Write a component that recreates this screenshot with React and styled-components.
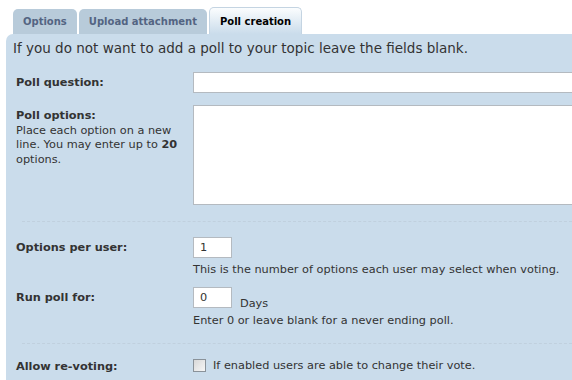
import React from "react";
import styled, { createGlobalStyle } from "styled-components";

const Global = createGlobalStyle`
  html, body { margin: 0; padding: 0; background: #fff; }
  body { font-family: "DejaVu Sans", Verdana, sans-serif; color: #333; }
`;

const Page = styled.div`
  width: 572px;
  height: 380px;
  overflow: hidden;
  padding: 8px 0 0 6px;
  box-sizing: border-box;
`;

const Tabs = styled.ul`
  display: flex;
  align-items: flex-end;
  gap: 2px;
  margin: 0 0 0 7px;
  padding: 0;
  list-style: none;
  height: 26px;
`;

const Tab = styled.li`
  height: ${p => (p.$active ? "27px" : "25px")};
  box-sizing: border-box;
  padding: 0 ${p => p.$pad}px;
  display: flex;
  align-items: center;
  font-size: 10px;
  font-weight: bold;
  border-radius: 5px 5px 0 0;
  color: ${p => (p.$active ? "#000" : "#536482")};
  background: ${p =>
    p.$active ? "linear-gradient(#fbfdfe, #cadceb)" : "#b8cbda"};
  ${p => p.$active && "border: 1px solid #c4d4e2; border-bottom: none; margin-top: -1px;"}
`;

const Panel = styled.div`
  background: #cadceb;
  border-radius: 7px 0 0 0;
  padding: 6px 0 0 7px;
  height: 400px;
`;

const Intro = styled.p`
  margin: 0 0 16px;
  font-size: 13.5px;
  color: #333;
  line-height: 16px;
  white-space: nowrap;
`;

const Row = styled.dl`
  display: flex;
  margin: 0 0 ${p => p.$mb ?? 11}px 3px;
`;

const Term = styled.dt`
  width: 177px;
  flex: none;
  font-size: 11.3px;
  line-height: 14.5px;
  color: #333;
  padding-top: ${p => p.$pt ?? 0}px;
`;

const Label = styled.label`
  display: block;
  font-weight: bold;
  color: #333;
`;

const Def = styled.dd`
  margin: 0;
  flex: 1;
  font-size: 11.3px;
  color: #333;
  white-space: nowrap;
`;

const TextInput = styled.input`
  box-sizing: border-box;
  width: ${p => p.$w};
  height: 21px;
  border: 1px solid #b4bac0;
  border-right: ${p => (p.$open ? "none" : "1px solid #b4bac0")};
  background: #fff;
  font: 11.3px "DejaVu Sans", Verdana, sans-serif;
  color: #333;
  padding: 2px 6px;
  display: inline-block;
  vertical-align: middle;
`;

const TextArea = styled.textarea`
  box-sizing: border-box;
  width: 400px;
  height: 100px;
  border: 1px solid #b4bac0;
  border-right: none;
  display: block;
  resize: none;
  background: #fff;
`;

const Explain = styled.div`
  font-size: 11.3px;
  line-height: 14px;
  margin-top: ${p => p.$mt ?? 4}px;
`;

const Unit = styled.span`
  font-size: 11.3px;
  margin-left: 8px;
  vertical-align: -6px;
`;

const Divider = styled.hr`
  border: none;
  border-top: 1px dashed #c0d0de;
  margin: ${p => p.$m};
  height: 0;
`;

const Check = styled.span`
  display: inline-block;
  width: 11px;
  height: 11px;
  border: 1px solid #8a9299;
  background: linear-gradient(135deg, #d8d8d8, #f6f6f6);
  vertical-align: -3px;
  margin-right: 7px;
`;

export default function App() {
  return (
    <>
      <Global />
      <Page>
        <Tabs>
          <Tab $pad={10}>Options</Tab>
          <Tab $pad={10}>Upload attachment</Tab>
          <Tab $pad={10} $active>Poll creation</Tab>
        </Tabs>
        <Panel>
          <Intro>If you do not want to add a poll to your topic leave the fields blank.</Intro>
          <Row $mb={12}>
            <Term $pt={4}><Label>Poll question:</Label></Term>
            <Def><TextInput $w="400px" $open /></Def>
          </Row>
          <Row $mb={0}>
            <Term $pt={4}>
              <Label>Poll options:</Label>
              Place each option on a new line. You may enter up to <b>20</b> options.
            </Term>
            <Def><TextArea /></Def>
          </Row>
          <Divider $m="16px 0 15px 9px" />
          <Row $mb={10}>
            <Term $pt={4}><Label>Options per user:</Label></Term>
            <Def>
              <TextInput $w="39px" defaultValue="1" />
              <Explain $mt={5}>This is the number of options each user may select when voting.</Explain>
            </Def>
          </Row>
          <Row $mb={0}>
            <Term $pt={4}><Label>Run poll for:</Label></Term>
            <Def>
              <TextInput $w="39px" defaultValue="0" />
              <Unit>Days</Unit>
              <Explain $mt={4}>Enter 0 or leave blank for a never ending poll.</Explain>
            </Def>
          </Row>
          <Divider $m="15px 0 15px 9px" />
          <Row>
            <Term $pt={1}><Label>Allow re-voting:</Label></Term>
            <Def><Check />If enabled users are able to change their vote.</Def>
          </Row>
        </Panel>
      </Page>
    </>
  );
}
